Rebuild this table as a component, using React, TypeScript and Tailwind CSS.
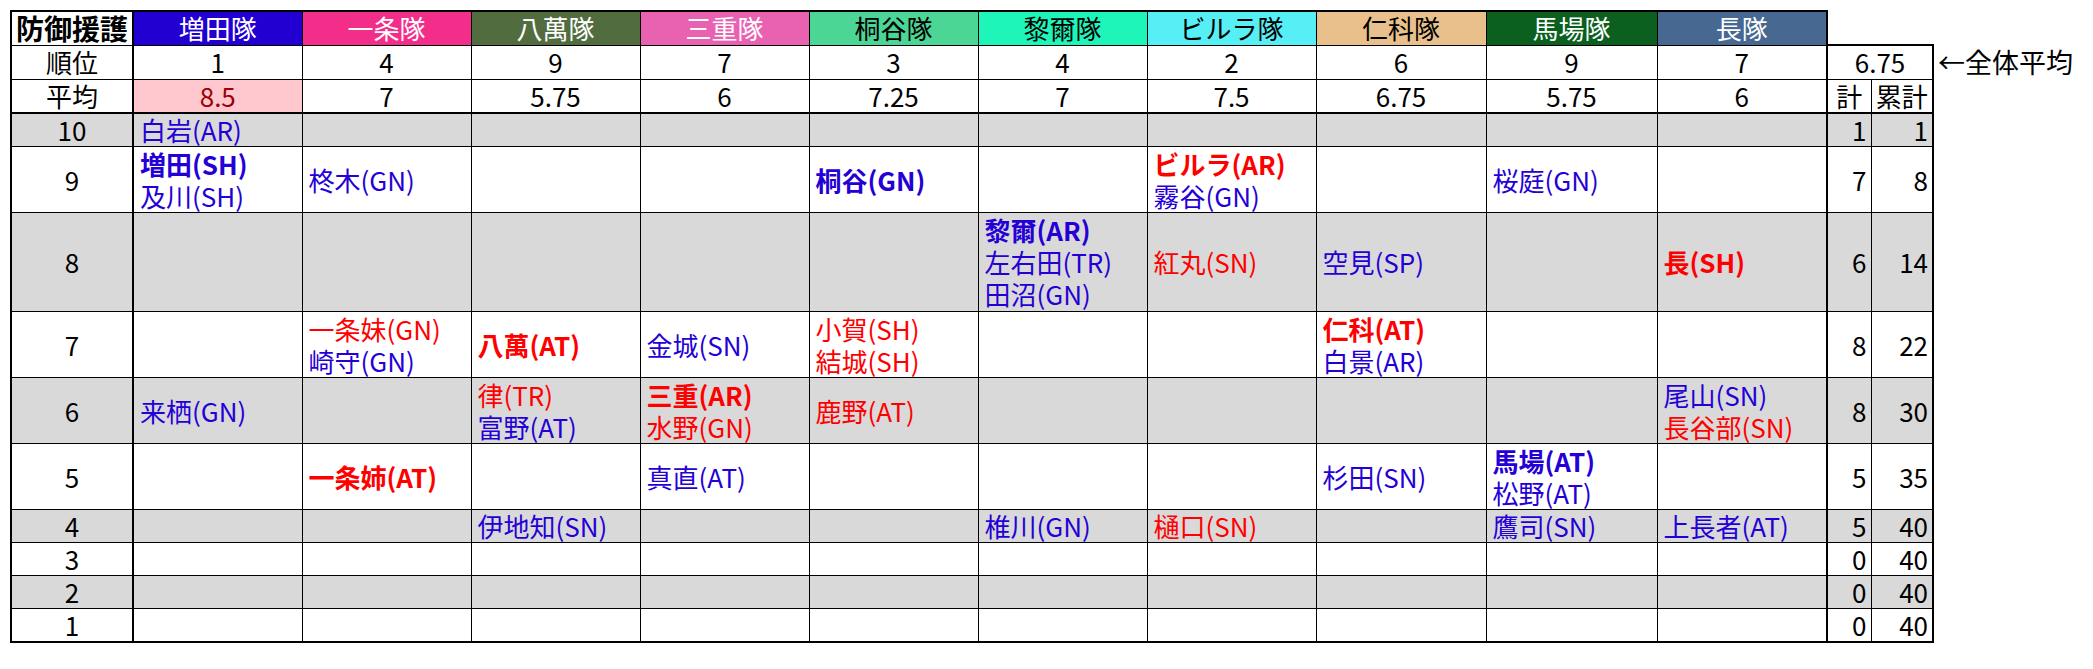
type Entry = { t: string; red?: boolean; bold?: boolean };

const b = (t: string): Entry => ({ t });
const B = (t: string): Entry => ({ t, bold: true });
const r = (t: string): Entry => ({ t, red: true });
const R = (t: string): Entry => ({ t, red: true, bold: true });

const teams = [
  { name: '増田隊', cls: 'bg-[#2200d2] text-white', w: 'w-[169px]' },
  { name: '一条隊', cls: 'bg-[#f22e8a] text-white', w: 'w-[169px]' },
  { name: '八萬隊', cls: 'bg-[#516d3f] text-white', w: 'w-[169px]' },
  { name: '三重隊', cls: 'bg-[#e962b2] text-white', w: 'w-[169px]' },
  { name: '桐谷隊', cls: 'bg-[#4cd695] text-black', w: 'w-[169px]' },
  { name: '黎爾隊', cls: 'bg-[#1ef6b9] text-black', w: 'w-[169px]' },
  { name: 'ビルラ隊', cls: 'bg-[#57eff6] text-black', w: 'w-[169px]' },
  { name: '仁科隊', cls: 'bg-[#e9c08b] text-black', w: 'w-[170px]' },
  { name: '馬場隊', cls: 'bg-[#0b5f1f] text-white', w: 'w-[171px]' },
  { name: '長隊', cls: 'bg-[#476891] text-white', w: 'w-[170px]' },
];

const ranks = ['1', '4', '9', '7', '3', '4', '2', '6', '9', '7'];
const avgs = ['8.5', '7', '5.75', '6', '7.25', '7', '7.5', '6.75', '5.75', '6'];

// score rows, cells keyed by team column index
const rows: { score: number; h: string; cells: Record<number, Entry[]>; sum: number; total: number }[] = [
  { score: 10, h: 'h-[33px]', cells: { 0: [b('白岩(AR)')] }, sum: 1, total: 1 },
  {
    score: 9,
    h: 'h-[66px]',
    cells: {
      0: [B('増田(SH)'), b('及川(SH)')],
      1: [b('柊木(GN)')],
      4: [B('桐谷(GN)')],
      6: [R('ビルラ(AR)'), b('霧谷(GN)')],
      8: [b('桜庭(GN)')],
    },
    sum: 7,
    total: 8,
  },
  {
    score: 8,
    h: 'h-[99px]',
    cells: {
      5: [B('黎爾(AR)'), b('左右田(TR)'), b('田沼(GN)')],
      6: [r('紅丸(SN)')],
      7: [b('空見(SP)')],
      9: [R('長(SH)')],
    },
    sum: 6,
    total: 14,
  },
  {
    score: 7,
    h: 'h-[66px]',
    cells: {
      1: [r('一条妹(GN)'), b('崎守(GN)')],
      2: [R('八萬(AT)')],
      3: [b('金城(SN)')],
      4: [r('小賀(SH)'), r('結城(SH)')],
      7: [R('仁科(AT)'), b('白景(AR)')],
    },
    sum: 8,
    total: 22,
  },
  {
    score: 6,
    h: 'h-[66px]',
    cells: {
      0: [b('来栖(GN)')],
      2: [r('律(TR)'), b('富野(AT)')],
      3: [R('三重(AR)'), r('水野(GN)')],
      4: [r('鹿野(AT)')],
      9: [b('尾山(SN)'), r('長谷部(SN)')],
    },
    sum: 8,
    total: 30,
  },
  {
    score: 5,
    h: 'h-[66px]',
    cells: {
      1: [R('一条姉(AT)')],
      3: [b('真直(AT)')],
      7: [b('杉田(SN)')],
      8: [B('馬場(AT)'), b('松野(AT)')],
    },
    sum: 5,
    total: 35,
  },
  {
    score: 4,
    h: 'h-[33px]',
    cells: {
      2: [b('伊地知(SN)')],
      5: [b('椎川(GN)')],
      6: [r('樋口(SN)')],
      8: [b('鷹司(SN)')],
      9: [b('上長者(AT)')],
    },
    sum: 5,
    total: 40,
  },
  { score: 3, h: 'h-[33px]', cells: {}, sum: 0, total: 40 },
  { score: 2, h: 'h-[33px]', cells: {}, sum: 0, total: 40 },
  { score: 1, h: 'h-[33px]', cells: {}, sum: 0, total: 40 },
];

const cell = 'border border-black align-middle';

export default function App() {
  return (
    <div
      className="min-h-screen bg-white pl-[10px] pt-[10px] text-black"
      style={{ fontFamily: '"Noto Sans CJK JP", "Noto Sans", sans-serif' }}
    >
      <table className="w-[2072px] table-fixed border-collapse text-[26px] leading-[32px]">
        <colgroup>
          <col className="w-[122px]" />
          {teams.map((t) => (
            <col key={t.name} className={t.w} />
          ))}
          <col className="w-[44px]" />
          <col className="w-[62px]" />
          <col className="w-[150px]" />
        </colgroup>
        <tbody>
          <tr className="h-[34px]">
            <td className={`${cell} border-l-2 border-t-2 border-r-2 text-center text-[28px] font-bold`}>防御援護</td>
            {teams.map((t, i) => (
              <td key={t.name} className={`${cell} border-t-2 text-center ${t.cls} ${i === 9 ? 'border-r-2' : ''}`}>
                {t.name}
              </td>
            ))}
            <td className="border-0" />
            <td className="border-0" />
            <td className="border-0" />
          </tr>
          <tr className="h-[34px]">
            <td className={`${cell} border-l-2 border-r-2 text-center`}>順位</td>
            {ranks.map((v, i) => (
              <td key={i} className={`${cell} text-center`}>
                {v}
              </td>
            ))}
            <td colSpan={2} className={`${cell} border-t-2 border-l-2 border-r-2 text-center`}>
              6.75
            </td>
            <td className="border-0 whitespace-nowrap pl-[4px] text-left text-[27px]">←全体平均</td>
          </tr>
          <tr className="h-[34px]">
            <td className={`${cell} border-l-2 border-r-2 border-b-2 text-center`}>平均</td>
            {avgs.map((v, i) => (
              <td
                key={i}
                className={`${cell} border-b-2 text-center ${i === 0 ? 'bg-[#ffc7ce] text-[#9c0006]' : ''}`}
              >
                {v}
              </td>
            ))}
            <td className={`${cell} border-l-2 border-b-2 text-center`}>計</td>
            <td className={`${cell} border-r-2 border-b-2 text-center`}>累計</td>
            <td className="border-0" />
          </tr>
          {rows.map((row, ri) => {
            const gray = row.score % 2 === 0 ? 'bg-[#d9d9d9]' : 'bg-white';
            const last = ri === rows.length - 1 ? 'border-b-2' : '';
            return (
              <tr key={row.score} className={row.h}>
                <td className={`${cell} ${gray} ${last} border-l-2 border-r-2 text-center`}>{row.score}</td>
                {teams.map((t, ci) => (
                  <td key={t.name} className={`${cell} ${gray} ${last} px-[6px] text-left`}>
                    {(row.cells[ci] ?? []).map((e) => (
                      <div
                        key={e.t}
                        className={`whitespace-nowrap ${e.red ? 'text-[#ff0000]' : 'text-[#2400d6]'} ${
                          e.bold ? 'font-bold' : ''
                        }`}
                      >
                        {e.t}
                      </div>
                    ))}
                  </td>
                ))}
                <td className={`${cell} ${gray} ${last} border-l-2 pr-[4px] text-right`}>{row.sum}</td>
                <td className={`${cell} ${gray} ${last} border-r-2 pr-[4px] text-right`}>{row.total}</td>
                <td className="border-0" />
              </tr>
            );
          })}
        </tbody>
      </table>
    </div>
  );
}
